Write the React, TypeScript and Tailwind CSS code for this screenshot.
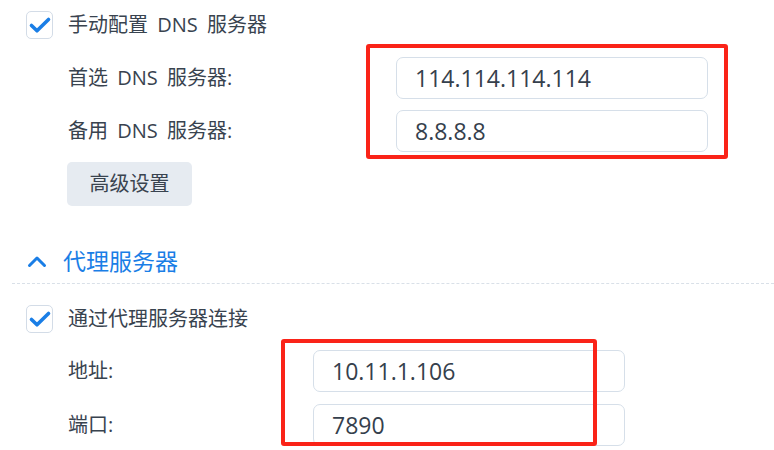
import React from 'react';

const font = "font-['Open_Sans','Noto_Sans_CJK_SC',sans-serif]";

const CheckBox = ({label}: {label: string}) => {
  return (
    <div className="flex items-center h-[28px] gap-[15px]">
      <div className="w-[27px] h-[28px] rounded-[5px] border-[1.5px] border-[#d3dce7] bg-white flex items-center justify-center">
        <svg width="24" height="24" viewBox="0 0 24 24">
          <path
            d="M3.5 12.5 L9 17.8 L20.5 6.5"
            fill="none"
            stroke="#1a7ee6"
            strokeWidth="3.6"
            strokeLinecap="round"
            strokeLinejoin="round"
          />
        </svg>
      </div>
      <span className="text-[20px] leading-none [word-spacing:4px]">{label}</span>
    </div>
  );
};

const Field = ({
  label,
  value,
  labelWidth,
}: {
  label: string;
  value: string;
  labelWidth: string;
}) => {
  return (
    <div className="flex items-center h-[42px]">
      <div className={`${labelWidth} text-[20px] leading-none [word-spacing:4px]`}>
        {label}
      </div>
      <div className="w-[312px] h-[42px] rounded-[7px] border border-[#d6dfe9] bg-white flex items-center pl-[18px] text-[23px] leading-none text-[#35404c]">
        {value}
      </div>
    </div>
  );
};

const App = () => {
  return (
    <div
      className={`relative w-[774px] h-[450px] overflow-hidden bg-white text-[#39434f] ${font}`}
    >
      <div className="pl-[26px] pt-[11px]">
        <CheckBox label="手动配置 DNS 服务器" />
        <div className="mt-[18px] ml-[42px] flex flex-col gap-[11px]">
          <Field label="首选 DNS 服务器:" value="114.114.114.114" labelWidth="w-[328px]" />
          <Field label="备用 DNS 服务器:" value="8.8.8.8" labelWidth="w-[328px]" />
        </div>
        <button className="mt-[10px] ml-[41px] w-[125px] h-[44px] rounded-[5px] bg-[#e6ebf1] text-[20px] text-[#39434f]">
          高级设置
        </button>

        <div className="mt-[40px] h-[30px] flex items-center gap-[16px] text-[#1a7ee6]">
          <svg width="20" height="14" viewBox="0 0 20 14" className="ml-[1px]">
            <polyline
              points="2.5,11.5 10,4 17.5,11.5"
              fill="none"
              stroke="#1a7ee6"
              strokeWidth="3"
              strokeLinecap="round"
              strokeLinejoin="round"
            />
          </svg>
          <span className="text-[23px] leading-none">代理服务器</span>
        </div>
      </div>

      <div className="ml-[12px] mt-[7px] border-t border-dashed border-[#d9e0e8]" />

      <div className="pl-[26px] pt-[21px]">
        <CheckBox label="通过代理服务器连接" />
        <div className="mt-[17px] ml-[42px] flex flex-col gap-[12px]">
          <Field label="地址:" value="10.11.1.106" labelWidth="w-[245px]" />
          <Field label="端口:" value="7890" labelWidth="w-[245px]" />
        </div>
      </div>

      {/* annotation boxes drawn over the form */}
      <div className="absolute left-[366px] top-[44px] w-[362px] h-[115px] border-[4px] border-[#fa2318] rounded-[3px]" />
      <div className="absolute left-[281px] top-[339px] w-[316px] h-[107px] border-[4px] border-[#fa2318] rounded-[3px]" />
    </div>
  );
};

export default App;
